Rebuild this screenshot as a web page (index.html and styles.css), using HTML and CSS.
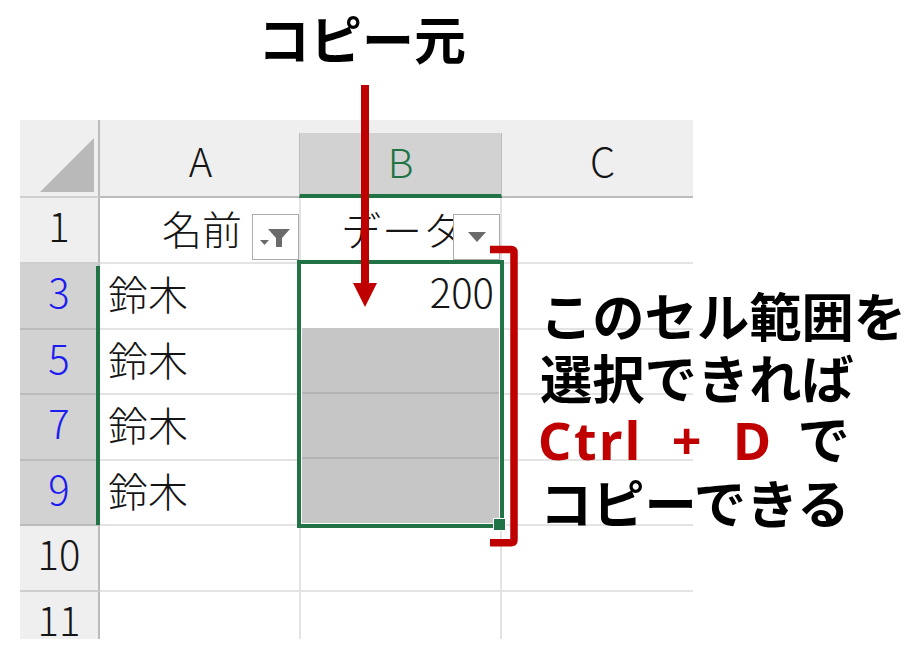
FILE: index.html
```html
<!DOCTYPE html>
<html lang="ja">
<head>
<meta charset="utf-8">
<title>コピー元</title>
<link rel="stylesheet" href="styles.css">
</head>
<body>
<div class="canvas">
  <div class="sheet">
    <div class="corner"><svg class="corner-tri" width="78" height="76" viewBox="0 0 78 76"><polygon points="74,18 74,72 20,72" fill="#b9b9b9"/></svg></div>
    <div class="colhead"><span>A</span></div>
    <div class="colhead sel"><span>B</span></div>
    <div class="colhead last"><span>C</span></div>

    <div class="rowhead">1</div>
    <div class="cell name-h">名前<span class="fbtn"><svg width="44" height="44" viewBox="0 0 44 44"><polygon points="6,25 15,25 10.500,30" fill="#6a6a6a"/><polygon points="14,14 36,14 28,23 28,32 22,32 22,23" fill="#6a6a6a"/></svg></span></div>
    <div class="cell data-h"><span class="clip">データ</span><span class="fbtn"><svg width="44" height="44" viewBox="0 0 44 44"><polygon points="13,17 31,17 22,27" fill="#6a6a6a"/></svg></span></div>
    <div class="cell last"></div>

    <div class="rowhead sel">3</div>
    <div class="cell">鈴木</div>
    <div class="cell right">200</div>
    <div class="cell last"></div>

    <div class="rowhead sel">5</div>
    <div class="cell">鈴木</div>
    <div class="cell"></div>
    <div class="cell last"></div>

    <div class="rowhead sel">7</div>
    <div class="cell">鈴木</div>
    <div class="cell"></div>
    <div class="cell last"></div>

    <div class="rowhead sel">9</div>
    <div class="cell">鈴木</div>
    <div class="cell"></div>
    <div class="cell last"></div>

    <div class="rowhead">10</div>
    <div class="cell"></div>
    <div class="cell"></div>
    <div class="cell last"></div>

    <div class="rowhead end">11</div>
    <div class="cell end"></div>
    <div class="cell end"></div>
    <div class="cell last end"></div>

    <div class="rowbar"></div>
    <div class="gray"><i></i><i></i><i></i></div>
    <div class="selection"><b class="handle"></b></div>
  </div>

  <div class="title">コピー元</div>
  <svg class="marks" width="921" height="658" viewBox="0 0 921 658">
    <rect x="361" y="85" width="8" height="199" fill="#c00000"/>
    <polygon points="353,283 377,283 365,307" fill="#c00000"/>
    <path d="M490 249.500 H511 Q514 249.500 514 252.500 V539.500 Q514 542.700 511 542.700 H490" fill="none" stroke="#c00000" stroke-width="7.500"/>
  </svg>
  <div class="note">
    <p>このセル範囲を</p>
    <p>選択できれば</p>
    <p><span class="key">Ctrl + D</span><span class="de">で</span></p>
    <p>コピーできる</p>
  </div>
</div>
</body>
</html>
```
FILE: styles.css
```css
html, body {
  margin: 0;
  padding: 0;
  background: #fff;
}
.canvas {
  position: relative;
  width: 921px;
  height: 658px;
  overflow: hidden;
  padding: 120px 0 0 20px;
  box-sizing: border-box;
  font-family: "Noto Sans CJK JP", "Noto Sans", sans-serif;
}
.sheet {
  position: relative;
  display: grid;
  grid-template-columns: 80px 201px 201px 201px;
  grid-template-rows: 78px 66px 66px 65px 66px 65px 66px 47px;
  width: 673px;
  height: 519px;
  overflow: hidden;
  background: #efefef;
  font-family: "Noto Sans CJK JP", sans-serif;
  font-weight: 300;
  font-size: 40px;
  color: #151515;
}
.corner {
  background: #efefef;
  border-right: 2px solid #bcbcbc;
  border-bottom: 2px solid #cfcfcf;
  box-sizing: border-box;
}
.corner-tri { display: block; }
.colhead {
  display: flex;
  align-items: center;
  justify-content: center;
  background: #efefef;
  padding-top: 4px;
  border-bottom: 2px solid #bcbcbc;
  box-sizing: border-box;
}
.colhead.sel {
  margin: 13px 0 0 -2px;
  padding: 0 0 5px;
  background: #d2d2d2;
  color: #217346;
  border-left: 1px solid #bcbcbc;
  border-right: 1px solid #bcbcbc;
  border-bottom: 4px solid #217346;
}
.rowhead {
  display: flex;
  align-items: flex-start;
  justify-content: center;
  line-height: 54px;
  background: #efefef;
  border-right: 2px solid #bcbcbc;
  border-bottom: 2px solid #cfcfcf;
  box-sizing: border-box;
}
.rowhead.sel {
  background: #d2d2d2;
  color: #1c1cf0;
  border-bottom-color: #bcbcbc;
}
.rowhead.end, .cell.end { border-bottom: 0; }
.cell {
  position: relative;
  display: flex;
  align-items: flex-start;
  line-height: 59px;
  padding-left: 8px;
  background: #fff;
  border-right: 2px solid #e3e3e3;
  border-bottom: 2px solid #e3e3e3;
  box-sizing: border-box;
  white-space: nowrap;
  overflow: hidden;
}
.cell.last { border-right: 0; }
.cell.right { justify-content: flex-end; padding-right: 6px; line-height: 54px; }
.name-h { padding-left: 62px; line-height: 60px; }
.data-h { padding-left: 40px; line-height: 62px; }
.clip { letter-spacing: 1px; }
.fbtn {
  position: absolute;
  right: 0;
  top: 16px;
  display: flex;
  align-items: center;
  justify-content: center;
  width: 47px;
  height: 46px;
  background: #fff;
  border: 1px solid #ababab;
  box-sizing: border-box;
}
.rowbar {
  position: absolute;
  left: 76px;
  top: 146px;
  width: 4px;
  height: 259px;
  background: #217346;
}
.gray {
  position: absolute;
  left: 282px;
  top: 208px;
  width: 197px;
  height: 195px;
  display: flex;
  flex-direction: column;
  background: #c6c6c6;
}
.gray i {
  flex: 1;
  border-bottom: 2px solid #b3b3b3;
}
.gray i:last-child { border-bottom: 0; }
.selection {
  position: absolute;
  left: 277px;
  top: 140px;
  width: 207px;
  height: 268px;
  border: 4px solid #217346;
  box-sizing: border-box;
  box-shadow: inset 0 0 0 1px #fff;
}
.handle {
  position: absolute;
  right: -6px;
  bottom: -7px;
  width: 11px;
  height: 11px;
  background: #217346;
  border: 1px solid #fff;
}
.title {
  position: absolute;
  left: 258px;
  top: 6px;
  font-size: 52px;
  line-height: 64px;
  font-weight: 700;
  color: #000;
  white-space: nowrap;
}
.marks {
  position: absolute;
  left: 0;
  top: 0;
}
.note {
  position: absolute;
  left: 540px;
  top: 284px;
  font-size: 52.300px;
  line-height: 61.500px;
  font-weight: 700;
  color: #000;
  white-space: nowrap;
}
.note p { margin: 0; }
.key {
  margin-left: -2px;
  font-family: "Noto Sans", sans-serif;
  font-size: 52px;
  color: #c00000;
  word-spacing: 13px;
  letter-spacing: 2.500px;
}
.de { margin-left: 24px; }
```
